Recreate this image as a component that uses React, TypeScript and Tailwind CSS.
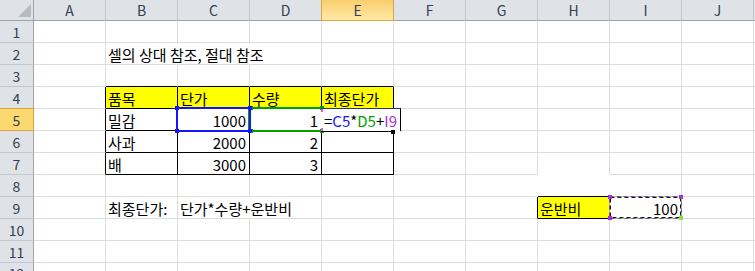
import React from 'react';

const COLS = ['A', 'B', 'C', 'D', 'E', 'F', 'G', 'H', 'I', 'J', 'K'];

type CellDef = {
  t?: string;
  right?: boolean;
  fill?: 'y' | 'w';
  br?: 'k' | 'w';
  bb?: 'k' | 'w';
  overlay?: 'blue' | 'green' | 'edit' | 'marquee';
};

const defs: Record<string, CellDef> = {
  B2: { t: '셀의 상대 참조, 절대 참조', br: 'w' },
  C2: { br: 'w' },
  B3: { bb: 'k' },
  C3: { bb: 'k' },
  D3: { bb: 'k' },
  E3: { bb: 'k' },
  A4: { br: 'k' },
  A5: { br: 'k' },
  A6: { br: 'k' },
  A7: { br: 'k' },
  B4: { t: '품목', fill: 'y', br: 'k', bb: 'k' },
  C4: { t: '단가', fill: 'y', br: 'k', bb: 'k' },
  D4: { t: '수량', fill: 'y', br: 'k', bb: 'k' },
  E4: { t: '최종단가', fill: 'y', br: 'k', bb: 'k' },
  B5: { t: '밀감', br: 'k', bb: 'k' },
  C5: { t: '1000', right: true, br: 'k', bb: 'k', overlay: 'blue' },
  D5: { t: '1', right: true, br: 'k', bb: 'k', overlay: 'green' },
  E5: { br: 'k', bb: 'k', overlay: 'edit' },
  B6: { t: '사과', br: 'k', bb: 'k' },
  C6: { t: '2000', right: true, br: 'k', bb: 'k' },
  D6: { t: '2', right: true, br: 'k', bb: 'k' },
  E6: { br: 'k', bb: 'k' },
  B7: { t: '배', br: 'k', bb: 'k' },
  C7: { t: '3000', right: true, br: 'k', bb: 'k' },
  D7: { t: '3', right: true, br: 'k', bb: 'k' },
  E7: { br: 'k', bb: 'k' },
  H7: { bb: 'w' },
  G8: { br: 'w' },
  H8: { fill: 'w', br: 'w', bb: 'k' },
  B9: { t: '최종단가:' },
  C9: { t: '단가*수량+운반비', br: 'w' },
  G9: { br: 'k' },
  H9: { t: '운반비', fill: 'y', br: 'k', bb: 'k' },
  I9: { t: '100', right: true, overlay: 'marquee' },
};

function cellClass(d: CellDef) {
  const parts = [
    'relative border-r border-b flex items-center whitespace-nowrap overflow-visible px-[2px] pt-[1px] text-[15px] leading-none text-black',
  ];
  parts.push(d.br === 'k' ? 'border-r-black' : d.br === 'w' ? 'border-r-white' : 'border-r-[#dadcdd]');
  parts.push(d.bb === 'k' ? 'border-b-black' : d.bb === 'w' ? 'border-b-white' : 'border-b-[#dadcdd]');
  if (d.fill === 'y') parts.push('bg-[#ffff00]');
  if (d.fill === 'w') parts.push('bg-white');
  parts.push(d.right ? 'justify-end pr-[3px]' : 'justify-start');
  return parts.join(' ');
}

function RangeBox({ color }: { color: 'blue' | 'green' }) {
  if (color === 'blue') {
    return (
      <div className="absolute -left-[2px] -top-[2px] w-[75px] h-[25px] border-2 border-[#1414ff] z-30">
        <span className="absolute -left-[3px] -top-[3px] w-[4px] h-[4px] bg-[#1414ff]" />
        <span className="absolute -right-[3px] -top-[3px] w-[4px] h-[4px] bg-[#1414ff]" />
        <span className="absolute -left-[3px] -bottom-[3px] w-[4px] h-[4px] bg-[#1414ff]" />
        <span className="absolute -right-[3px] -bottom-[3px] w-[4px] h-[4px] bg-[#1414ff]" />
      </div>
    );
  }
  return (
    <div className="absolute -left-[2px] -top-[2px] w-[75px] h-[25px] border-2 border-[#00a000] z-20">
      <span className="absolute -left-[1px] -top-[3px] w-[4px] h-[4px] bg-[#00a000]" />
      <span className="absolute -right-[3px] -top-[3px] w-[4px] h-[4px] bg-[#00a000]" />
      <span className="absolute -left-[1px] -bottom-[3px] w-[4px] h-[4px] bg-[#00a000]" />
      <span className="absolute -right-[3px] -bottom-[3px] w-[4px] h-[4px] bg-[#00a000]" />
    </div>
  );
}

function Editor() {
  return (
    <div className="absolute -left-[1px] -top-[1px] w-[80px] h-[23px] z-40 bg-white border-t border-t-[#24348c] border-r border-r-black">
      <div className="flex items-center h-full pl-[3px] pt-[1px] text-[15px] leading-none whitespace-nowrap">
        <span className="text-black">=</span>
        <span className="text-[#1414ff]">C5</span>
        <span className="text-black">*</span>
        <span className="text-[#00a000]">D5</span>
        <span className="text-black">+</span>
        <span className="text-[#b030d8]">I9</span>
      </div>
      <span className="absolute left-0 -bottom-[1px] w-[72px] h-[1px] bg-black" />
      <span className="absolute left-[70px] -bottom-[3px] w-[4px] h-[4px] bg-black" />
      <span className="absolute left-0 top-0 w-[2px] h-[3px] bg-[#ee55cc]" />
      <span className="absolute left-0 bottom-0 w-[2px] h-[3px] bg-[#ee55cc]" />
    </div>
  );
}

function Marquee() {
  return (
    <svg className="absolute -left-[4px] -top-[4px] z-30" width="80" height="30" viewBox="0 0 80 30">
      <rect x="3.5" y="3.5" width="72" height="22" fill="none" stroke="#77ee44" strokeWidth="1" />
      <rect x="3.5" y="3.5" width="72" height="22" fill="none" stroke="#a030e0" strokeWidth="1" strokeDasharray="4 3" />
      <rect x="4.5" y="4.5" width="70" height="20" fill="none" stroke="#111" strokeWidth="1" strokeDasharray="4 3" />
      <rect x="2" y="2" width="4" height="4" fill="#a030e0" />
      <rect x="73" y="2" width="4" height="4" fill="#a030e0" />
      <rect x="2" y="23" width="4" height="4" fill="#a030e0" />
      <rect x="73" y="23" width="4" height="4" fill="#88e055" />
    </svg>
  );
}

function ColHeader({ name, idx }: { name: string; idx: number }) {
  const label = name === 'K' ? '' : name;
  if (name === 'E') {
    return (
      <div className="border-r border-b border-r-[#e1a53b] border-b-[#e1a53b] bg-linear-to-b from-[#f8cf6c] to-[#ffe9a4] flex items-center justify-center text-[14px] leading-none text-[#34404f]">
        {label}
      </div>
    );
  }
  if (idx === 3) {
    return (
      <div className="border-r border-b border-r-[#e1a53b] border-b-[#9ea4ac] bg-[#dfe3e8] flex items-center justify-center text-[14px] leading-none text-[#34404f]">
        {label}
      </div>
    );
  }
  return (
    <div className="border-r border-b border-r-[#c3c7cd] border-b-[#9ea4ac] bg-[#dfe3e8] flex items-center justify-center text-[14px] leading-none text-[#34404f]">
      {label}
    </div>
  );
}

function RowHeader({ r }: { r: number }) {
  if (r === 5) {
    return (
      <div className="border-r border-b border-r-[#e0a139] border-b-[#e0a139] bg-[#fcd870] flex items-center justify-center pt-[1px] text-[14px] leading-none text-[#34404f]">
        {r}
      </div>
    );
  }
  if (r === 4) {
    return (
      <div className="border-r border-b border-r-[#9ea4ac] border-b-[#e0a139] bg-[#dfe3e8] flex items-center justify-center pt-[1px] text-[14px] leading-none text-[#34404f]">
        {r}
      </div>
    );
  }
  return (
    <div className="border-r border-b border-r-[#9ea4ac] border-b-[#c3c7cd] bg-[#dfe3e8] flex items-center justify-center pt-[1px] text-[14px] leading-none text-[#34404f]">
      {r}
    </div>
  );
}

export default function App() {
  const rows = Array.from({ length: 11 }, (_, i) => i + 1);
  return (
    <div className="w-[755px] h-[271px] overflow-hidden bg-white font-['Noto_Sans_CJK_KR','Noto_Sans',sans-serif]">
      <div className="grid grid-cols-[34px_repeat(11,72px)] grid-rows-[21px_repeat(12,22px)]">
        <div className="border-r border-b border-r-[#9ea4ac] border-b-[#9ea4ac] bg-[#dfe3e8] flex items-end justify-end pr-[1px] pb-[2px]">
          <svg width="14" height="14" viewBox="0 0 14 14">
            <polygon points="13,0 13,13 0,13" fill="#b6bbc2" />
          </svg>
        </div>
        {COLS.map((c, i) => (
          <ColHeader key={c} name={c} idx={i} />
        ))}
        {rows.map((r) => (
          <React.Fragment key={r}>
            <RowHeader r={r} />
            {COLS.map((c) => {
              const d = defs[`${c}${r}`] || {};
              return (
                <div key={c} className={cellClass(d)}>
                  {d.t ? <span className="relative z-10">{d.t}</span> : null}
                  {d.overlay === 'blue' ? <RangeBox color="blue" /> : null}
                  {d.overlay === 'green' ? <RangeBox color="green" /> : null}
                  {d.overlay === 'edit' ? <Editor /> : null}
                  {d.overlay === 'marquee' ? <Marquee /> : null}
                </div>
              );
            })}
          </React.Fragment>
        ))}
        <div className="border-r border-r-[#9ea4ac] bg-[#dfe3e8] flex items-start justify-center pt-[3px] text-[14px] leading-none text-[#34404f]">
          12
        </div>
        {COLS.map((c) => (
          <div key={c} className="border-r border-r-[#dadcdd]" />
        ))}
      </div>
    </div>
  );
}
